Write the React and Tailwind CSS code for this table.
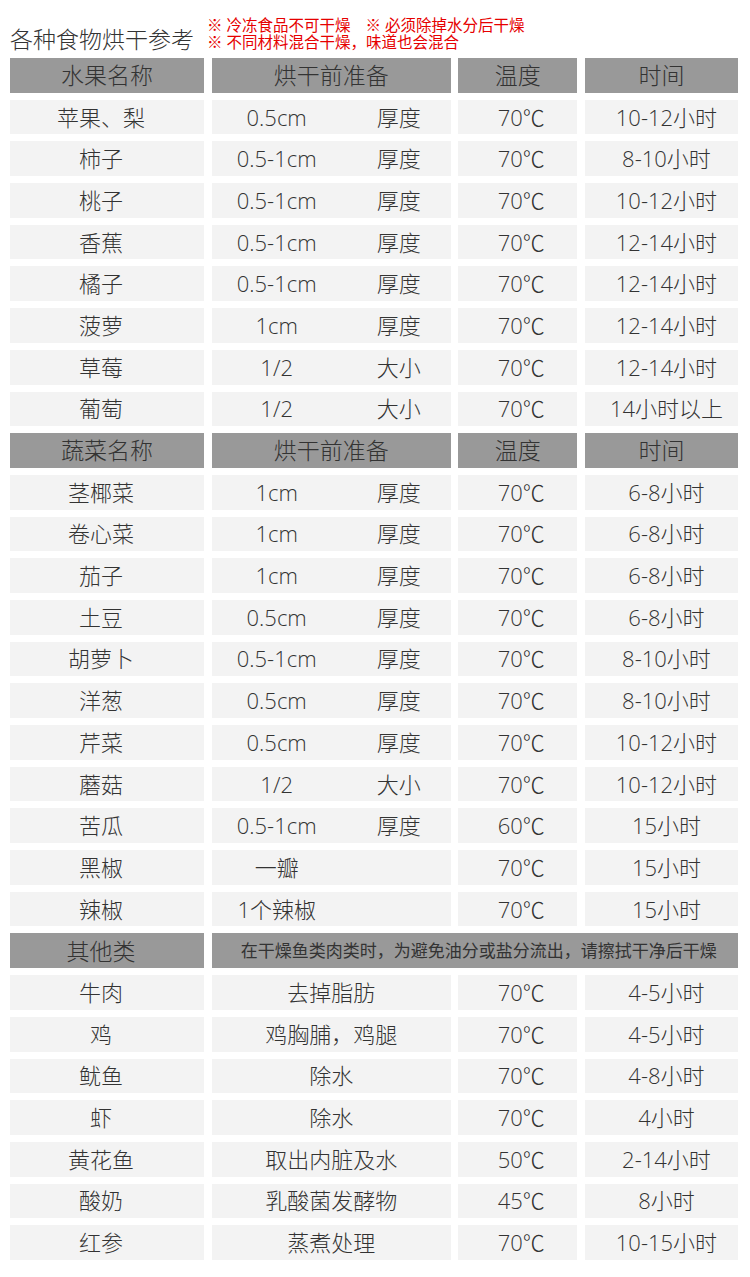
import React from "react";

const fruits = [
  ["苹果、梨", "0.5cm", "厚度", "70℃", "10-12小时"],
  ["柿子", "0.5-1cm", "厚度", "70℃", "8-10小时"],
  ["桃子", "0.5-1cm", "厚度", "70℃", "10-12小时"],
  ["香蕉", "0.5-1cm", "厚度", "70℃", "12-14小时"],
  ["橘子", "0.5-1cm", "厚度", "70℃", "12-14小时"],
  ["菠萝", "1cm", "厚度", "70℃", "12-14小时"],
  ["草莓", "1/2", "大小", "70℃", "12-14小时"],
  ["葡萄", "1/2", "大小", "70℃", "14小时以上"],
];

const veg = [
  ["茎椰菜", "1cm", "厚度", "70℃", "6-8小时"],
  ["卷心菜", "1cm", "厚度", "70℃", "6-8小时"],
  ["茄子", "1cm", "厚度", "70℃", "6-8小时"],
  ["土豆", "0.5cm", "厚度", "70℃", "6-8小时"],
  ["胡萝卜", "0.5-1cm", "厚度", "70℃", "8-10小时"],
  ["洋葱", "0.5cm", "厚度", "70℃", "8-10小时"],
  ["芹菜", "0.5cm", "厚度", "70℃", "10-12小时"],
  ["蘑菇", "1/2", "大小", "70℃", "10-12小时"],
  ["苦瓜", "0.5-1cm", "厚度", "60℃", "15小时"],
  ["黑椒", "一瓣", "", "70℃", "15小时"],
  ["辣椒", "1个辣椒", "", "70℃", "15小时"],
];

const others = [
  ["牛肉", "去掉脂肪", "70℃", "4-5小时"],
  ["鸡", "鸡胸脯，鸡腿", "70℃", "4-5小时"],
  ["鱿鱼", "除水", "70℃", "4-8小时"],
  ["虾", "除水", "70℃", "4小时"],
  ["黄花鱼", "取出内脏及水", "50℃", "2-14小时"],
  ["酸奶", "乳酸菌发酵物", "45℃", "8小时"],
  ["红参", "蒸煮处理", "70℃", "10-15小时"],
];

function Header({ name }) {
  return (
    <>
      <div className="bg-[#999999] flex items-center justify-center text-[23px]">{name}</div>
      <div className="bg-[#999999] flex items-center justify-center text-[23px]">烘干前准备</div>
      <div className="bg-[#999999] flex items-center justify-center text-[23px]">温度</div>
      <div className="bg-[#999999] flex items-center justify-center text-[23px]">时间</div>
    </>
  );
}

function Row({ r }) {
  return (
    <>
      <div className="bg-[#f3f3f3] flex items-center justify-center pr-[12px] text-[22px]">{r[0]}</div>
      <div className="bg-[#f3f3f3] flex items-center text-[22px]">
        <span className="w-[130px] text-center">{r[1]}</span>
        <span className="ml-[35px]">{r[2]}</span>
      </div>
      <div className="bg-[#f3f3f3] flex items-center justify-center pl-[7px] text-[22px]">{r[3]}</div>
      <div className="bg-[#f3f3f3] flex items-center justify-center pl-[10px] text-[22px]">{r[4]}</div>
    </>
  );
}

function OtherRow({ r }) {
  return (
    <>
      <div className="bg-[#f3f3f3] flex items-center justify-center pr-[12px] text-[22px]">{r[0]}</div>
      <div className="bg-[#f3f3f3] flex items-center justify-center text-[22px]">{r[1]}</div>
      <div className="bg-[#f3f3f3] flex items-center justify-center pl-[7px] text-[22px]">{r[2]}</div>
      <div className="bg-[#f3f3f3] flex items-center justify-center pl-[10px] text-[22px]">{r[3]}</div>
    </>
  );
}

export default function App() {
  return (
    <div className="w-[750px] h-[1277px] bg-white text-[#333333] font-light font-['Open_Sans','Noto_Sans_CJK_SC',sans-serif] overflow-hidden">
      <div className="h-[58px] flex items-end pl-[10px] pb-[4px]">
        <div className="text-[23px] leading-[30px] mr-[13px]">各种食物烘干参考</div>
        <div className="flex flex-col text-[#e60000] text-[15.5px] font-normal pb-[3px]">
          <div className="flex h-[17px] leading-[17px]">
            <span>※ 冷冻食品不可干燥</span>
            <span className="ml-[15px]">※ 必须除掉水分后干燥</span>
          </div>
          <div className="h-[17px] leading-[17px]">※ 不同材料混合干燥，味道也会混合</div>
        </div>
      </div>
      <div className="grid grid-cols-[194px_239px_119px_153px] auto-rows-[34.7px] gap-x-[7.67px] gap-y-[7px] px-[10px]">
        <Header name="水果名称" />
        {fruits.map((r, i) => (
          <Row key={"f" + i} r={r} />
        ))}
        <Header name="蔬菜名称" />
        {veg.map((r, i) => (
          <Row key={"v" + i} r={r} />
        ))}
        <div className="bg-[#999999] flex items-center justify-center pr-[12px] text-[23px]">其他类</div>
        <div className="bg-[#999999] col-span-3 flex items-center justify-center pl-[8px] text-[17px] font-normal">
          在干燥鱼类肉类时，为避免油分或盐分流出，请擦拭干净后干燥
        </div>
        {others.map((r, i) => (
          <OtherRow key={"o" + i} r={r} />
        ))}
      </div>
    </div>
  );
}
